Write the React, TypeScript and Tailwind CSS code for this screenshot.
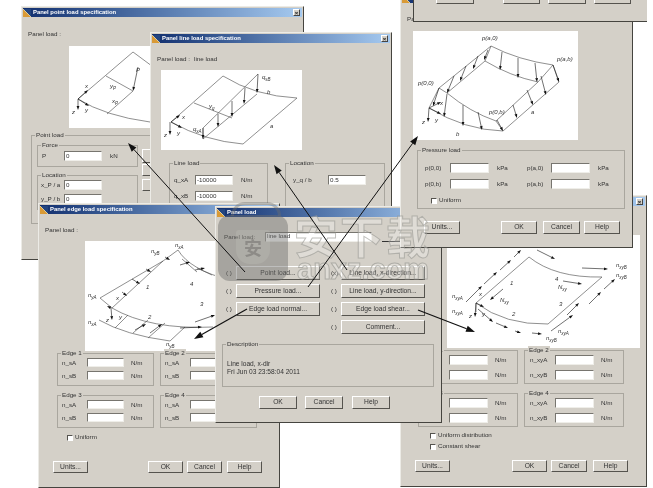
import type { ReactNode } from "react"

const bevel = "border border-t-white border-l-white border-r-[#55534e] border-b-[#55534e]"

function Arrow({ a, b, w = 0.6, head = 4 }: { a: [number, number]; b: [number, number]; w?: number; head?: number }) {
  const ang = Math.atan2(b[1] - a[1], b[0] - a[0])
  const hx = b[0] - Math.cos(ang) * head
  const hy = b[1] - Math.sin(ang) * head
  const nx = -Math.sin(ang) * head * 0.35
  const ny = Math.cos(ang) * head * 0.35
  return (
    <g>
      <line x1={a[0]} y1={a[1]} x2={hx} y2={hy} stroke="#111" strokeWidth={w} />
      <polygon points={`${b[0]},${b[1]} ${hx + nx},${hy + ny} ${hx - nx},${hy - ny}`} fill="#111" stroke="none" />
    </g>
  )
}

function T({ x, y, t, sub }: { x: number; y: number; t: string; sub?: string }) {
  return (
    <text x={x} y={y} fontSize="6" fontStyle="italic" fill="#333" stroke="none" fontFamily="Liberation Sans, sans-serif">
      {t}
      {sub && (
        <tspan fontSize="4.5" dy="1.5">
          {sub}
        </tspan>
      )}
    </text>
  )
}

function Diagram({ box, children }: { box: string; children: ReactNode }) {
  return (
    <svg viewBox={box} className="block h-full w-full" fill="none" stroke="#444" strokeWidth="0.6">
      {children}
    </svg>
  )
}

function Win({
  left,
  top,
  width,
  height,
  title,
  close,
  children,
}: {
  left: number
  top: number
  width: number
  height: number
  title: string
  close?: boolean
  children?: ReactNode
}) {
  return (
    <div
      className="absolute flex flex-col overflow-hidden border border-t-[#ecebe6] border-l-[#ecebe6] border-r-[#45443f] border-b-[#45443f] bg-[#d4d0c8] p-px"
      style={{ left, top, width, height }}
    >
      <div className="flex h-[9px] shrink-0 items-center bg-gradient-to-r from-[#13306f] to-[#a6caf0] pr-[2px]">
        <svg viewBox="0 0 8 8" className="mr-[2px] h-[8px] w-[8px] shrink-0">
          <rect width="8" height="8" fill="#24457f" />
          <path d="M0 0 L8 8 L0 8 Z" fill="#d99a36" />
          <path d="M0 0 L8 8" stroke="#f2e3b0" strokeWidth="0.8" />
        </svg>
        <span className="truncate text-[5.9px] font-bold leading-[9px] text-white">{title}</span>
        {close && (
          <span className="ml-auto flex h-[7px] w-[7px] items-center justify-center border border-t-white border-l-white border-r-[#444] border-b-[#444] bg-[#d4d0c8] text-[6px] font-bold leading-none text-[#111]">
            ×
          </span>
        )}
      </div>
      {children}
    </div>
  )
}

function Field({ w, h = 10, value }: { w: number; h?: number; value?: string }) {
  return (
    <div
      className="flex shrink-0 items-center border border-t-[#77756f] border-l-[#77756f] border-r-[#efeee9] border-b-[#efeee9] bg-white pl-[1px] text-[6.25px] leading-none"
      style={{ width: w, height: h }}
    >
      {value}
    </div>
  )
}

function Btn({ w, h = 13, label, className = "" }: { w: number; h?: number; label: string; className?: string }) {
  return (
    <div
      className={`flex shrink-0 items-center justify-center bg-[#d4d0c8] text-[6.7px] leading-none ${bevel} ${className}`}
      style={{ width: w, height: h }}
    >
      {label}
    </div>
  )
}

function Group({ label, className = "", children }: { label: string; className?: string; children?: ReactNode }) {
  return (
    <div className={`relative shrink-0 border border-[#a9a69e] ${className}`}>
      <span className="absolute left-[3px] top-[-5px] bg-[#d4d0c8] px-px text-[6.25px] leading-[8px]">{label}</span>
      {children}
    </div>
  )
}

function Check({ label, className = "" }: { label: string; className?: string }) {
  return (
    <div className={`flex h-[7px] items-center gap-[2px] text-[6.25px] leading-none ${className}`}>
      <span className="h-[6px] w-[6px] border border-t-[#55534e] border-l-[#55534e] border-r-white border-b-white bg-white" />
      {label}
    </div>
  )
}

function EdgeGroup({ label, a, b, input }: { label: string; a: string; b: string; input: number }) {
  const bigger = input > 37
  return (
    <Group label={label} className={bigger ? "h-[34px] pt-[4px]" : "h-[33px] pt-[4px]"}>
      <div className={bigger ? "flex flex-col gap-[5px] pl-[5px]" : "flex flex-col gap-[4px] pl-[4px]"}>
        {[a, b].map((n) => (
          <div key={n} className="flex items-center">
            <span className="w-[25px]">{n}</span>
            <Field w={input} h={bigger ? 10 : 9} />
            <span className="ml-[7px]">N/m</span>
          </div>
        ))}
      </div>
    </Group>
  )
}

function RadioRow({ label, x, h = 14 }: { label: string; x?: boolean; h?: number }) {
  return (
    <div className="flex items-center">
      <span className="w-[10px] shrink-0 text-[6.25px] leading-none">{x ? "(x)" : "( )"}</span>
      <Btn w={84} h={h} label={label} />
    </div>
  )
}

export default function App() {
  return (
    <div className="relative h-[488px] w-[653px] overflow-hidden bg-white font-['Liberation_Sans',sans-serif] text-[6.25px] leading-[8px] text-[#333] [filter:blur(0.3px)]">
      {/* point load */}
      <Win left={21} top={6} width={283} height={254} title="Panel point load specification" close>
        <div className="ml-[5px] mt-[13px]">Panel load :</div>
        <div className="ml-[46px] mt-[8px] h-[82px] w-[161px] bg-white">
          <Diagram box="69 46 161 82">
            <path d="M78 99 L133 52 L160 72" />
            <path d="M78 99 Q105 116 150 122" />
            <path d="M106 76 L133 91 L107 114" />
            <Arrow a={[138, 67]} b={[133, 91]} />
            <Arrow a={[78, 99]} b={[88, 90]} />
            <Arrow a={[78, 99]} b={[89, 106]} />
            <Arrow a={[78, 99]} b={[78, 110]} />
            <T x={85} y={88} t="x" />
            <T x={110} y={88} t="y" sub="P" />
            <T x={112} y={103} t="x" sub="P" />
            <T x={72} y={114} t="z" />
            <T x={85} y={112} t="y" />
            <T x={136} y={72} t="P" />
          </Diagram>
        </div>
        <Group label="Point load" className="ml-[8px] mt-[7px] h-[89px] w-[200px]">
          <div className="flex">
            <div className="ml-[5px] mt-[9px]">
              <Group label="Force" className="flex h-[22px] w-[101px] items-center pl-[4px]">
                <span className="w-[22px]">P</span>
                <Field w={38} value="0" />
                <span className="ml-[8px]">kN</span>
              </Group>
              <Group label="Location" className="mt-[8px] h-[35px] w-[101px] pl-[3px] pt-[4px]">
                <div className="flex flex-col gap-[4px]">
                  <div className="flex items-center">
                    <span className="w-[23px]">x_P / a</span>
                    <Field w={38} value="0" />
                  </div>
                  <div className="flex items-center">
                    <span className="w-[23px]">y_P / b</span>
                    <Field w={38} value="0" />
                  </div>
                </div>
              </Group>
            </div>
            <div className="ml-[4px] mt-[13px] flex flex-col gap-[1px]">
              <Btn w={40} h={14} label="" />
              <Btn w={40} h={12} label="" />
              <Btn w={40} h={12} label="" className="mt-[2px]" />
            </div>
          </div>
        </Group>
      </Win>

      {/* line load */}
      <Win left={150} top={32} width={242} height={240} title="Panel line load specification" close>
        <div className="ml-[5px] mt-[12px] flex">
          <span className="w-[37px]">Panel load :</span>
          <span>line load</span>
        </div>
        <div className="ml-[9px] mt-[7px] h-[80px] w-[141px] bg-white">
          <Diagram box="161 69 141 80">
            <path d="M171 121 L223 75 Q255 95 297 97 L243 143 Q205 140 171 121" />
            <path d="M194 102 L232 117" />
            <path d="M258 73 L203 127 L203 138" />
            <path d="M257 93 L203 138" />
            <Arrow a={[258, 73]} b={[257, 92]} />
            <Arrow a={[245, 87]} b={[244, 103]} />
            <Arrow a={[232, 100]} b={[232, 116]} />
            <Arrow a={[218, 113]} b={[218, 126]} />
            <Arrow a={[203, 127]} b={[203, 138]} />
            <Arrow a={[171, 121]} b={[180, 114]} />
            <Arrow a={[171, 121]} b={[182, 127]} />
            <Arrow a={[170, 121]} b={[170, 134]} />
            <T x={262} y={78} t="q" sub="sB" />
            <T x={267} y={93} t="b" />
            <T x={209} y={107} t="y" sub="q" />
            <T x={182} y={118} t="x" />
            <T x={164} y={136} t="z" />
            <T x={177} y={134} t="y" />
            <T x={193} y={130} t="q" sub="xA" />
            <T x={270} y={127} t="a" />
          </Diagram>
        </div>
        <div className="ml-[17px] mt-[13px] flex gap-[17px]">
          <Group label="Line load" className="h-[60px] w-[99px] pl-[4px] pt-[11px]">
            <div className="flex flex-col gap-[6px]">
              <div className="flex items-center">
                <span className="w-[21px]">q_xA</span>
                <Field w={38} value="-10000" />
                <span className="ml-[8px]">N/m</span>
              </div>
              <div className="flex items-center">
                <span className="w-[21px]">q_xB</span>
                <Field w={38} value="-10000" />
                <span className="ml-[8px]">N/m</span>
              </div>
            </div>
          </Group>
          <Group label="Location" className="h-[60px] w-[100px] pl-[7px] pt-[11px]">
            <div className="flex items-center">
              <span className="w-[35px]">y_q / b</span>
              <Field w={38} value="0.5" />
            </div>
          </Group>
        </div>
      </Win>

      {/* edge load shear */}
      <Win left={400} top={195} width={247} height={292} title="Panel edge load specification" close>
        <div className="ml-[45px] mt-[29px] h-[113px] w-[193px] bg-white">
          <Diagram box="447 235 193 113">
            <path d="M476 303 L529 257 Q555 278 602 277 L548 324 Q505 325 476 303" />
            <path d="M476 303 L476 312" />
            <Arrow a={[466, 302]} b={[482, 286]} />
            <Arrow a={[484, 284]} b={[497, 272]} />
            <Arrow a={[500, 270]} b={[511, 260]} />
            <Arrow a={[514, 257]} b={[521, 250]} />
            <Arrow a={[537, 250]} b={[555, 259]} />
            <Arrow a={[582, 268]} b={[608, 269]} />
            <Arrow a={[563, 281]} b={[582, 284]} />
            <Arrow a={[604, 289]} b={[615, 279]} />
            <Arrow a={[589, 304]} b={[601, 292]} />
            <Arrow a={[567, 315]} b={[579, 303]} />
            <Arrow a={[551, 331]} b={[573, 315]} />
            <Arrow a={[478, 309]} b={[493, 322]} />
            <Arrow a={[496, 323]} b={[508, 328]} />
            <Arrow a={[515, 331]} b={[521, 333]} />
            <Arrow a={[532, 333]} b={[542, 334]} />
            <Arrow a={[503, 289]} b={[490, 300]} />
            <Arrow a={[476, 303]} b={[484, 307]} />
            <Arrow a={[476, 303]} b={[475, 317]} />
            <T x={452} y={298} t="n" sub="xyA" />
            <T x={452} y={313} t="n" sub="xyA" />
            <T x={616} y={267} t="n" sub="xyB" />
            <T x={616} y={277} t="n" sub="xyB" />
            <T x={558} y={333} t="n" sub="xyA" />
            <T x={546} y={340} t="n" sub="xyB" />
            <T x={500} y={302} t="N" sub="xy" />
            <T x={558} y={289} t="N" sub="xy" />
            <T x={510} y={285} t="1" />
            <T x={512} y={316} t="2" />
            <T x={559} y={306} t="3" />
            <T x={555} y={281} t="4" />
            <T x={479} y={296} t="x" />
            <T x={482} y={316} t="y" />
            <T x={469} y={318} t="z" />
          </Diagram>
        </div>
        <div className="ml-[16px] mt-[2px] grid w-[206px] grid-cols-2 gap-x-[6px] gap-y-[9px]">
          <EdgeGroup label="Edge 1" a="n_xyA" b="n_xyB" input={39} />
          <EdgeGroup label="Edge 2" a="n_xyA" b="n_xyB" input={39} />
          <EdgeGroup label="Edge 3" a="n_xyA" b="n_xyB" input={39} />
          <EdgeGroup label="Edge 4" a="n_xyA" b="n_xyB" input={39} />
        </div>
        <Check label="Uniform distribution" className="ml-[28px] mt-[5px]" />
        <Check label="Constant shear" className="ml-[28px] mt-[4px]" />
        <div className="ml-[13px] mt-[10px] flex">
          <Btn w={35} h={12} label="Units..." />
          <Btn w={35} h={12} label="OK" className="ml-[62px]" />
          <Btn w={36} h={12} label="Cancel" className="ml-[4px]" />
          <Btn w={35} h={12} label="Help" className="ml-[6px]" />
        </div>
      </Win>

      {/* edge load normal */}
      <Win left={38} top={203} width={242} height={285} title="Panel edge load specification">
        <div className="ml-[5px] mt-[12px]">Panel load :</div>
        <div className="ml-[45px] mt-[7px] h-[110px] w-[155px] bg-white">
          <Diagram box="85 241 155 110">
            <path d="M100 298 L163 261 L178 250 Q190 270 230 280" />
            <path d="M100 298 L112 308 Q150 330 213 327" />
            <path d="M99 320 Q125 335 170 341 L185 327" />
            <path d="M112 308 L163 261" />
            <path d="M115 328 L128 315 M133 333 L148 320 M148 338 L165 323" />
            <path d="M182 259 L197 272 M197 268 L212 275" />
            <Arrow a={[122, 292]} b={[127, 296]} />
            <Arrow a={[132, 279]} b={[140, 284]} />
            <Arrow a={[146, 269]} b={[151, 272]} />
            <Arrow a={[165, 257]} b={[170, 260]} />
            <Arrow a={[180, 265]} b={[190, 262]} />
            <Arrow a={[195, 270]} b={[205, 268]} />
            <Arrow a={[135, 330]} b={[146, 324]} />
            <Arrow a={[150, 333]} b={[162, 324]} />
            <Arrow a={[180, 328]} b={[202, 327]} />
            <Arrow a={[195, 322]} b={[215, 315]} />
            <Arrow a={[111, 308]} b={[107, 306]} />
            <Arrow a={[111, 308]} b={[112, 320]} />
            <T x={88} y={297} t="n" sub="yA" />
            <T x={151} y={253} t="n" sub="yB" />
            <T x={175} y={247} t="n" sub="xA" />
            <T x={88} y={324} t="n" sub="xA" />
            <T x={166} y={346} t="n" sub="yB" />
            <T x={146} y={289} t="1" />
            <T x={190} y={286} t="4" />
            <T x={148} y={319} t="2" />
            <T x={200} y={306} t="3" />
            <T x={116} y={300} t="x" />
            <T x={119} y={319} t="y" />
            <T x={106} y={322} t="z" />
          </Diagram>
        </div>
        <div className="ml-[17px] mt-[2px] grid w-[200px] grid-cols-2 gap-x-[6px] gap-y-[9px]">
          <EdgeGroup label="Edge 1" a="n_sA" b="n_sB" input={37} />
          <EdgeGroup label="Edge 2" a="n_sA" b="n_sB" input={37} />
          <EdgeGroup label="Edge 3" a="n_sA" b="n_sB" input={37} />
          <EdgeGroup label="Edge 4" a="n_sA" b="n_sB" input={37} />
        </div>
        <Check label="Uniform" className="ml-[27px] mt-[6px]" />
        <div className="ml-[13px] mt-[20px] flex">
          <Btn w={35} h={12} label="Units..." />
          <Btn w={35} h={12} label="OK" className="ml-[60px]" />
          <Btn w={35} h={12} label="Cancel" className="ml-[4px]" />
          <Btn w={35} h={12} label="Help" className="ml-[5px]" />
        </div>
      </Win>

      {/* panel load chooser */}
      <Win left={215} top={206} width={227} height={217} title="Panel load">
        <div className="ml-[7px] mt-[14px] flex items-center">
          <span className="w-[41px]">Panel load:</span>
          <Field w={107} value="line load" />
          <span className="ml-[10px] mt-[10px] h-px w-[18px] bg-[#333]" />
        </div>
        <div className="ml-[9px] mt-[24px] grid w-[200px] grid-cols-[105px_95px] gap-y-[4px]">
          <RadioRow label="Point load..." />
          <RadioRow label="Line load, x-direction..." x />
          <RadioRow label="Pressure load..." />
          <RadioRow label="Line load, y-direction..." />
          <RadioRow label="Edge load normal..." />
          <RadioRow label="Edge load shear..." />
          <div />
          <RadioRow label="Comment..." />
        </div>
        <Group label="Description" className="ml-[5px] mt-[10px] h-[43px] w-[212px] pl-[4px] pt-[15px] text-[6.6px]">
          <div>Line load, x-dir</div>
          <div>Fri Jun 03 23:58:04 2011</div>
        </Group>
        <div className="ml-[42px] mt-[9px] flex">
          <Btn w={38} label="OK" />
          <Btn w={38} label="Cancel" className="ml-[8px]" />
          <Btn w={38} label="Help" className="ml-[9px]" />
        </div>
      </Win>

      {/* pressure load, title hidden above the page */}
      <Win left={400} top={-8} width={233} height={256} title="">
        <div className="ml-[5px] mt-[12px]">Panel load :</div>
        <div className="ml-[11px] mt-[8px] h-[109px] w-[165px] bg-white">
          <Diagram box="413 31 165 109">
            <path d="M429 108 L439 88 L491 46 Q518 60 553 65 L559 82 L503 131 Q465 130 429 108" />
            <path d="M447 93 L485 61 Q510 76 538 82 L496 121 Q470 112 447 93" />
            <path d="M491 46 L485 61 M553 65 L538 82 M439 88 L447 93 M503 131 L496 121" />
            <Arrow a={[439, 88]} b={[433, 106]} />
            <Arrow a={[454, 76]} b={[447, 93]} />
            <Arrow a={[466, 66]} b={[460, 81]} />
            <Arrow a={[478, 56]} b={[473, 69]} />
            <Arrow a={[488, 50]} b={[484, 60]} />
            <Arrow a={[502, 52]} b={[500, 70]} />
            <Arrow a={[518, 58]} b={[518, 78]} />
            <Arrow a={[535, 63]} b={[537, 82]} />
            <Arrow a={[553, 65]} b={[559, 82]} />
            <Arrow a={[541, 76]} b={[546, 95]} />
            <Arrow a={[527, 90]} b={[533, 105]} />
            <Arrow a={[513, 105]} b={[517, 118]} />
            <Arrow a={[497, 120]} b={[503, 131]} />
            <Arrow a={[478, 112]} b={[482, 130]} />
            <Arrow a={[463, 105]} b={[463, 126]} />
            <Arrow a={[447, 94]} b={[444, 117]} />
            <Arrow a={[429, 108]} b={[441, 102]} />
            <Arrow a={[429, 108]} b={[441, 114]} />
            <Arrow a={[429, 108]} b={[428, 122]} />
            <T x={482} y={40} t="p(a,0)" />
            <T x={557} y={61} t="p(a,b)" />
            <T x={418} y={85} t="p(0,0)" />
            <T x={440} y={105} t="x" />
            <T x={435} y={122} t="y" />
            <T x={422} y={124} t="z" />
            <T x={489} y={114} t="p(0,b)" />
            <T x={531} y={114} t="a" />
            <T x={456} y={136} t="b" />
          </Diagram>
        </div>
        <Group label="Pressure load" className="ml-[15px] mt-[10px] h-[59px] w-[208px] pl-[7px] pt-[12px]">
          <div className="flex flex-col gap-[6px]">
            {[
              ["p(0,0)", "p(a,0)"],
              ["p(0,b)", "p(a,b)"],
            ].map((row) => (
              <div key={row[0]} className="flex items-center">
                <span className="w-[25px]">{row[0]}</span>
                <Field w={39} />
                <span className="ml-[8px] w-[30px]">kPa</span>
                <span className="w-[24px]">{row[1]}</span>
                <Field w={39} />
                <span className="ml-[8px]">kPa</span>
              </div>
            ))}
          </div>
          <Check label="Uniform" className="ml-[6px] mt-[8px]" />
        </Group>
        <div className="ml-[22px] mt-[12px] flex">
          <Btn w={36} label="Units..." />
          <Btn w={36} label="OK" className="ml-[41px]" />
          <Btn w={37} label="Cancel" className="ml-[6px]" />
          <Btn w={36} label="Help" className="ml-[4px]" />
        </div>
      </Win>

      {/* cropped dialog at the top edge */}
      <div className="absolute left-[413px] top-[-20px] flex h-[42px] w-[234px] items-start border-b border-l border-b-[#45443f] border-l-[#45443f] bg-[#d4d0c8] pl-[22px] pt-[10px]">
        <Btn w={38} h={14} label="" />
        <Btn w={37} h={14} label="" className="ml-[29px]" />
        <Btn w={38} h={14} label="" className="ml-[8px]" />
        <Btn w={37} h={14} label="" className="ml-[8px]" />
      </div>

      {/* watermark */}
      <div className="absolute left-[218px] top-[215px] flex h-[66px] w-[70px] items-center justify-center rounded-[12px] bg-[#6e6e6c]/45">
        <span className="mt-[-2px] flex h-[34px] w-[34px] items-center justify-center rounded-b-[14px] rounded-t-[3px] bg-[#d4d0c8]/20 font-['Noto_Sans_CJK_SC',sans-serif] text-[18px] font-bold leading-none text-[#8d8b87]">
          安
        </span>
      </div>
      <div className="absolute left-[231px] top-[202px] h-[14px] w-[50px] rounded-t-[22px] border-[3px] border-b-0 border-[#6e6e6c]/40" />
      <div className="absolute left-[294px] top-[213px] font-['Noto_Sans_CJK_SC',sans-serif] text-[44px] font-bold leading-[44px] tracking-[2px] text-white/25 [-webkit-text-stroke:1px_rgba(150,150,145,0.6)]">
        安下载
      </div>
      <div className="absolute left-[297px] top-[255px] text-[29px] font-bold leading-[29px] text-white/25 [-webkit-text-stroke:1px_rgba(150,150,145,0.65)]">
        anxz.com
      </div>

      {/* callout arrows */}
      <svg viewBox="0 0 653 488" className="pointer-events-none absolute left-0 top-0 h-[488px] w-[653px]">
        <Arrow a={[245, 272]} b={[128, 143]} w={1} head={9} />
        <Arrow a={[347, 270]} b={[274, 165]} w={1} head={9} />
        <Arrow a={[308, 287]} b={[418, 136]} w={1} head={9} />
        <Arrow a={[247, 309]} b={[194, 339]} w={1.2} head={9} />
        <Arrow a={[418, 310]} b={[475, 332]} w={1.2} head={9} />
      </svg>
    </div>
  )
}
